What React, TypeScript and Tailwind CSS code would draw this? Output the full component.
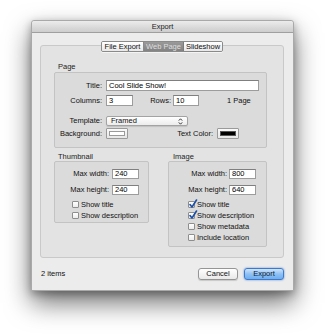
import React from "react";

const font = { fontFamily: '"Liberation Sans", Arial, sans-serif' };

function Input({ w, value }: { w: string; value: string }) {
  return (
    <div
      className={`${w} h-[11px] bg-white border border-[#9c9c9c] border-t-[#7f7f7f] flex items-center pl-[2px] text-[7.5px] leading-none text-[#000]`}
    >
      {value}
    </div>
  );
}

function SmallInput({ w, value }: { w: string; value: string }) {
  return (
    <div
      className={`${w} h-[10px] bg-white border border-[#9c9c9c] border-t-[#7f7f7f] flex items-center pl-[2px] text-[7.5px] leading-none text-[#000]`}
    >
      {value}
    </div>
  );
}

function Check({ checked, label }: { checked?: boolean; label: string }) {
  return (
    <div className="h-[11px] flex items-center">
      <div className="relative w-[7px] h-[7px] bg-gradient-to-b from-white to-[#ececec] border border-[#8e8e8e] rounded-[1px] mr-[2px]">
        {checked && (
          <svg
            className="absolute -left-[1px] -top-[3px]"
            width="10"
            height="10"
            viewBox="0 0 10 10"
          >
            <path
              d="M2 5.5 L4 8 L8.5 1"
              fill="none"
              stroke="#1d4fa8"
              strokeWidth="1.6"
              strokeLinecap="round"
              strokeLinejoin="round"
            />
          </svg>
        )}
      </div>
      <span className="text-[7.5px] leading-none text-[#111]">{label}</span>
    </div>
  );
}

function Label({ w, children }: { w: string; children: React.ReactNode }) {
  return (
    <div className={`${w} text-right text-[7.5px] leading-none text-[#111] shrink-0`}>
      {children}
    </div>
  );
}

export default function App() {
  return (
    <div className="w-[325px] h-[334px] bg-white pt-[20px] pl-[31px]" style={font}>
      <div className="w-[263px] h-[271px] flex flex-col bg-[#ececec] border border-[#a9a9a9] rounded-t-[3px] shadow-[0_12px_26px_rgba(0,0,0,0.55),0_3px_8px_rgba(0,0,0,0.3)]">
        {/* title bar */}
        <div className="h-[12px] shrink-0 bg-gradient-to-b from-[#ececec] to-[#cdcdcd] border-b border-[#9f9f9f] rounded-t-[3px] flex items-center justify-center text-[7.5px] leading-none text-[#222]">
          Export
        </div>

        <div className="pl-[8px] pt-[12px]">
          {/* tab box */}
          <div className="relative w-[244px] h-[213px] bg-[#e3e3e3] border border-[#c9c9c9] rounded-[3px] pl-[13px]">
            {/* segmented control */}
            <div className="absolute -top-[5px] left-[60px] flex h-[11px] border border-[#8a8a8a] rounded-[2px] overflow-hidden text-[7.5px] leading-none shadow-[0_1px_0_rgba(255,255,255,0.6)]">
              <div className="w-[42px] flex items-center justify-center bg-gradient-to-b from-white to-[#e8e8e8] text-[#111] border-r border-[#8a8a8a]">
                File Export
              </div>
              <div className="w-[40px] flex items-center justify-center bg-gradient-to-b from-[#9a9a9a] to-[#828282] text-[#dedede] border-r border-[#7a7a7a]">
                Web Page
              </div>
              <div className="w-[38px] flex items-center justify-center bg-gradient-to-b from-white to-[#e8e8e8] text-[#111]">
                Slideshow
              </div>
            </div>

            <div className="mt-[16px] h-[9px] pl-[4px] text-[7.5px] leading-[9px] text-[#222]">Page</div>
            {/* page box */}
            <div className="mt-[1px] w-[213px] h-[76px] bg-[#dbdbdb] border border-[#c3c3c3] rounded-[2px] pt-[7px]">
              <div className="flex items-center h-[11px]">
                <Label w="w-[47px]">Title:</Label>
                <div className="ml-[4px]">
                  <Input w="w-[153px]" value="Cool Slide Show!" />
                </div>
              </div>
              <div className="flex items-center h-[11px] mt-[4px]">
                <Label w="w-[47px]">Columns:</Label>
                <div className="ml-[4px]">
                  <Input w="w-[27px]" value="3" />
                </div>
                <Label w="w-[38px]">Rows:</Label>
                <div className="ml-[2px]">
                  <Input w="w-[26px]" value="10" />
                </div>
                <span className="ml-[28px] text-[7.5px] leading-none text-[#111]">1 Page</span>
              </div>
              <div className="flex items-center h-[10px] mt-[10px]">
                <Label w="w-[47px]">Template:</Label>
                <div className="ml-[4px] w-[82px] h-[10px] bg-gradient-to-b from-white to-[#ececec] border border-[#a3a3a3] rounded-[2px] flex items-center justify-between pl-[4px] pr-[4px] text-[7.5px] leading-none text-[#111] shadow-[0_1px_1px_rgba(0,0,0,0.12)]">
                  <span>Framed</span>
                  <svg width="5" height="7" viewBox="0 0 5 7">
                    <path d="M0.8 2.6 L2.5 0.8 L4.2 2.6" fill="none" stroke="#222" strokeWidth="0.9" />
                    <path d="M0.8 4.4 L2.5 6.2 L4.2 4.4" fill="none" stroke="#222" strokeWidth="0.9" />
                  </svg>
                </div>
              </div>
              <div className="flex items-center h-[11px] mt-[2px]">
                <Label w="w-[47px]">Background:</Label>
                <div className="ml-[4px] w-[22px] h-[11px] bg-gradient-to-b from-[#fafafa] to-[#e6e6e6] border border-[#9a9a9a] rounded-[1px] p-[2px]">
                  <div className="w-full h-full bg-white border border-[#9a9a9a]" />
                </div>
                <Label w="w-[85px]">Text Color:</Label>
                <div className="ml-[4px] w-[22px] h-[11px] bg-gradient-to-b from-[#fafafa] to-[#e6e6e6] border border-[#9a9a9a] rounded-[1px] p-[2px]">
                  <div className="w-full h-full bg-black border border-[#555]" />
                </div>
              </div>
            </div>

            {/* lower boxes */}
            <div className="flex mt-[4px]">
              <div className="w-[95px]">
                <div className="h-[9px] pl-[4px] text-[7.5px] leading-[9px] text-[#222]">Thumbnail</div>
                <div className="w-[95px] h-[62px] bg-[#dbdbdb] border border-[#c3c3c3] rounded-[2px] pt-[7px]">
                  <div className="flex items-center h-[10px]">
                    <Label w="w-[54px]">Max width:</Label>
                    <div className="ml-[3px]">
                      <SmallInput w="w-[27px]" value="240" />
                    </div>
                  </div>
                  <div className="flex items-center h-[10px] mt-[6px]">
                    <Label w="w-[54px]">Max height:</Label>
                    <div className="ml-[3px]">
                      <SmallInput w="w-[27px]" value="240" />
                    </div>
                  </div>
                  <div className="pl-[17px] mt-[4px]">
                    <Check label="Show title" />
                    <Check label="Show description" />
                  </div>
                </div>
              </div>
              <div className="w-[99px] ml-[19px]">
                <div className="h-[9px] pl-[5px] text-[7.5px] leading-[9px] text-[#222]">Image</div>
                <div className="w-[99px] h-[86px] bg-[#dbdbdb] border border-[#c3c3c3] rounded-[2px] pt-[7px]">
                  <div className="flex items-center h-[10px]">
                    <Label w="w-[58px]">Max width:</Label>
                    <div className="ml-[2px]">
                      <SmallInput w="w-[27px]" value="800" />
                    </div>
                  </div>
                  <div className="flex items-center h-[10px] mt-[6px]">
                    <Label w="w-[58px]">Max height:</Label>
                    <div className="ml-[2px]">
                      <SmallInput w="w-[27px]" value="640" />
                    </div>
                  </div>
                  <div className="pl-[19px] mt-[4px]">
                    <Check checked label="Show title" />
                    <Check checked label="Show description" />
                    <Check label="Show metadata" />
                    <Check label="Include location" />
                  </div>
                </div>
              </div>
            </div>
          </div>

          {/* bottom bar */}
          <div className="w-[244px] mt-[10px] h-[12px] flex items-center pl-[1px]">
            <span className="text-[7.5px] leading-none text-[#111]">2 items</span>
            <div className="ml-auto flex gap-[6px]">
              <div className="w-[40px] h-[12px] bg-gradient-to-b from-white to-[#e9e9e9] border border-[#959595] rounded-[3px] flex items-center justify-center text-[7.5px] leading-none text-[#111] shadow-[0_1px_1px_rgba(0,0,0,0.15)]">
                Cancel
              </div>
              <div className="w-[40px] h-[12px] bg-gradient-to-b from-[#cfe4fb] via-[#8fc0f3] to-[#6eaef0] border border-[#3e79c9] rounded-[3px] flex items-center justify-center text-[7.5px] leading-none text-[#0b1a33] shadow-[0_0_2px_rgba(40,110,220,0.8)]">
                Export
              </div>
            </div>
          </div>
        </div>
      </div>
    </div>
  );
}
